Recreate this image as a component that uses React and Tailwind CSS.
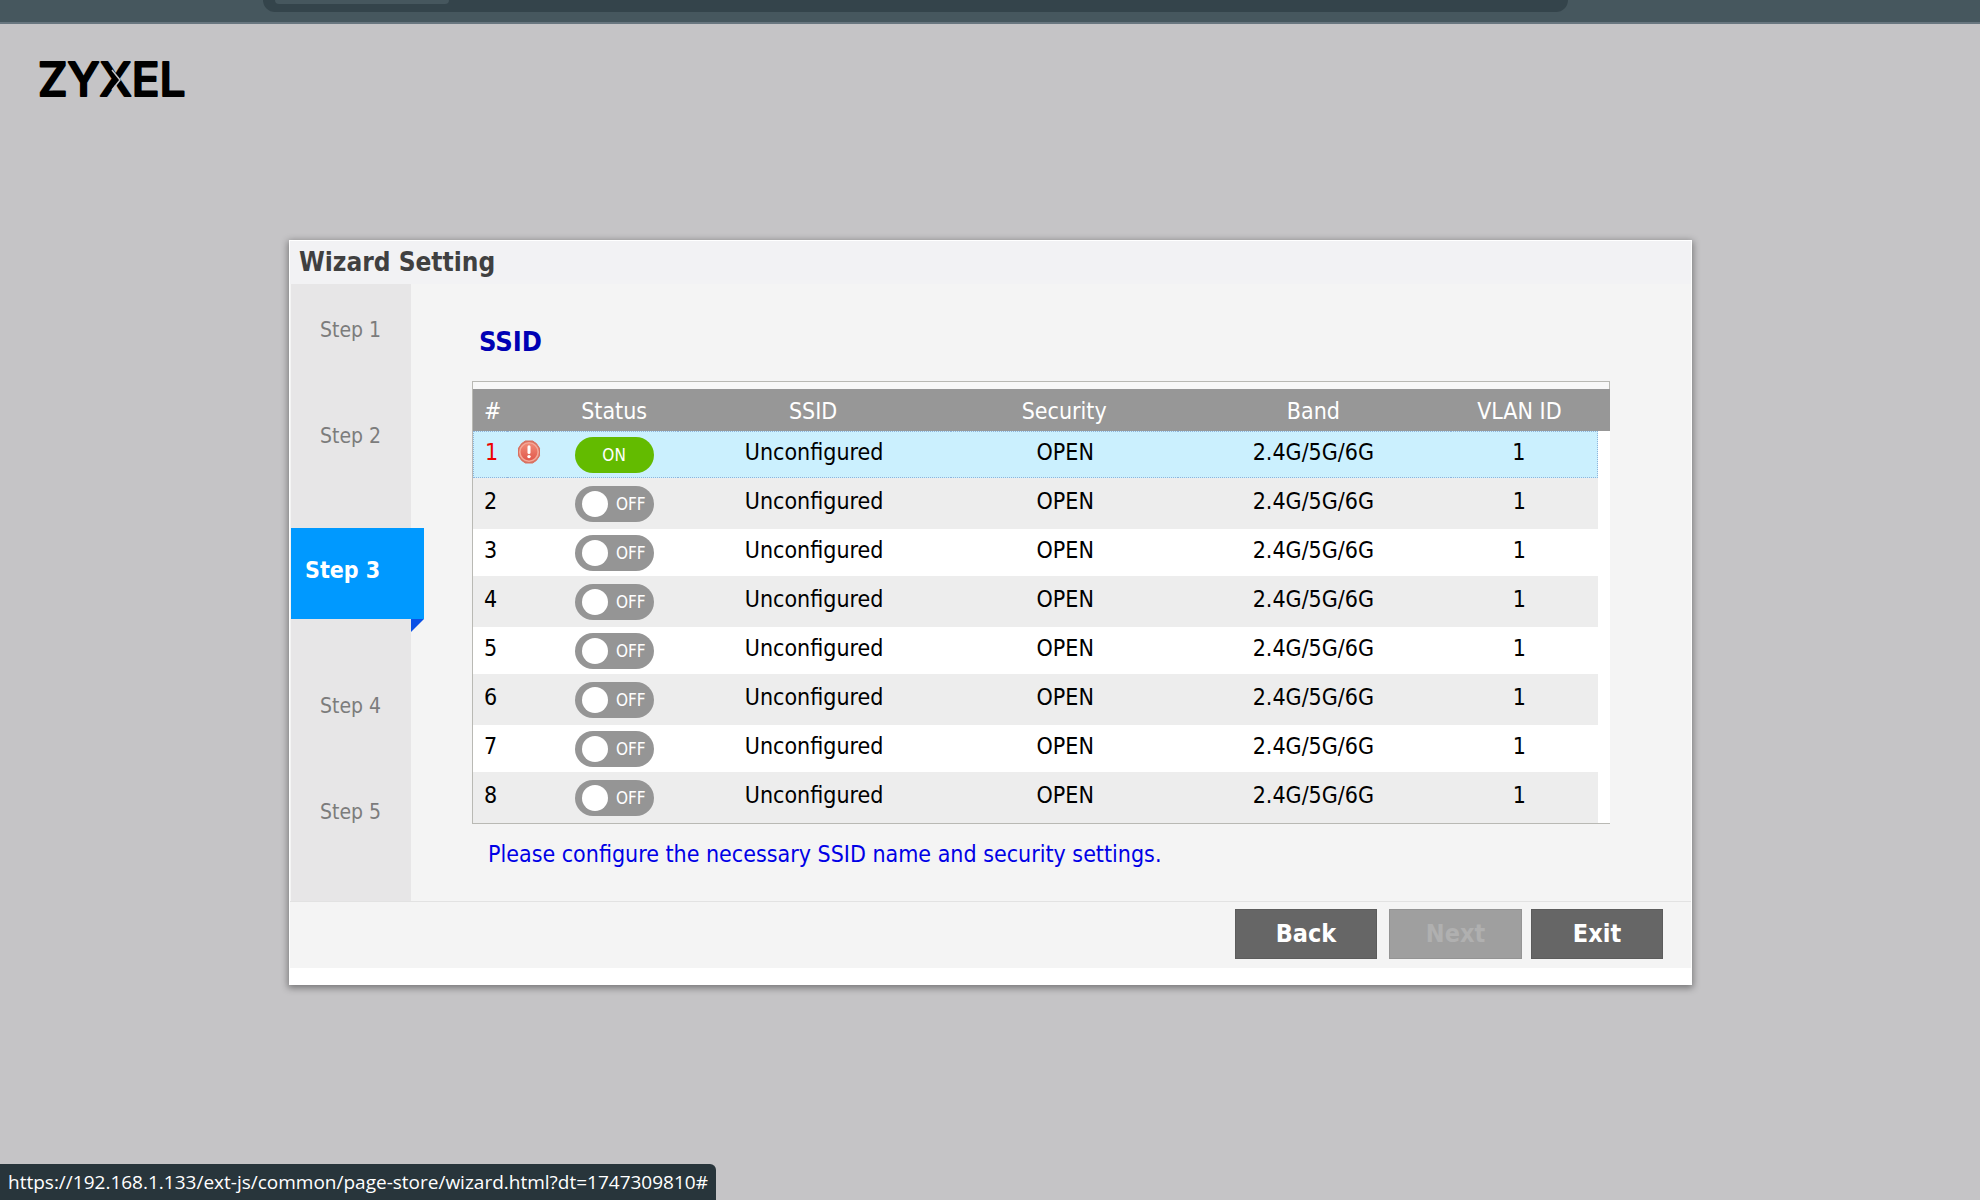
import { useState } from "react";
import clsx from "clsx";

const steps = ["Step 1", "Step 2", "Step 3", "Step 4", "Step 5"];
const activeStep = "Step 3";

const initialRows = Array.from({ length: 8 }, (_, i) => ({
  id: i + 1,
  enabled: i === 0,
  hasError: i === 0,
  ssid: "Unconfigured",
  security: "OPEN",
  band: "2.4G/5G/6G",
  vlan: 1,
}));

function Logo() {
  return (
    <svg width="170" height="70" viewBox="0 0 170 70" role="img" aria-label="ZYXEL">
      <text
        x="4"
        y="50"
        fontFamily="Inter, sans-serif"
        fontWeight="500"
        fontSize="46"
        fill="#000"
        stroke="#000"
        strokeWidth="2"
        strokeLinejoin="round"
      >
        ZYXEL
      </text>
      {/* cut between the two halves of the X */}
      <path d="M78 24l8 10-8 10" fill="none" stroke="#c5c4c6" strokeWidth="1.5" />
    </svg>
  );
}

// Red badge with an exclamation mark
function ErrorIcon() {
  return (
    <svg width="24" height="24" viewBox="0 0 24 24" aria-hidden="true">
      <defs>
        <linearGradient id="err" x1="0" y1="0" x2="0" y2="1">
          <stop offset="0" stopColor="#f28c78" />
          <stop offset="1" stopColor="#e0564a" />
        </linearGradient>
      </defs>
      <path d="M8.4 1h7.2l3.8 2.6 3.1 4.6v7.6l-3.1 4.6-3.8 2.6H8.4l-3.8-2.6-3.1-4.6V8.200l3.100-4.600z" fill="#d9705f" stroke="#d9705f" strokeWidth="1" strokeLinejoin="round" />
      <circle cx="12" cy="12" r="9.2" fill="url(#err)" stroke="#f4a898" strokeWidth="1.6" />
      <path d="M12 6.8v5.6" stroke="#fff" strokeWidth="3" strokeLinecap="round" />
      <circle cx="12" cy="16.6" r="1.7" fill="#fff" />
    </svg>
  );
}

function Toggle({ checked, onChange }) {
  return (
    <label
      className={clsx(
        "inline-flex h-9 w-[79px] cursor-pointer items-center rounded-full align-middle text-[17px] text-white",
        checked ? "justify-center bg-[#63bb00]" : "justify-between bg-[#959595] pl-[7px] pr-2"
      )}
    >
      <input type="checkbox" className="sr-only" checked={checked} onChange={onChange} />
      {!checked && <span className="h-[26px] w-[26px] rounded-full bg-white" />}
      <span>{checked ? "ON" : "OFF"}</span>
    </label>
  );
}

function Steps() {
  return (
    <ol className="flex w-[120px] shrink-0 flex-col gap-[78px] bg-[#e7e6e7] pt-8 text-[21px] leading-7 text-[#7c7c7c]">
      {steps.map((step) =>
        step === activeStep ? (
          <li key={step} aria-current="step" className="relative -mr-[13px] -mb-[5px] h-[91px] bg-[#0099ff] pt-7 pl-3.5 text-[23px] font-bold text-white">
            {step}
            {/* folded ribbon corner */}
            <svg className="absolute top-full right-0" width="13" height="13" viewBox="0 0 13 13" aria-hidden="true">
              <path d="M0 0h13L0 13z" fill="#0a50e6" />
            </svg>
          </li>
        ) : (
          <li key={step} className="pl-[29px]">
            {step}
          </li>
        )
      )}
    </ol>
  );
}

function SsidTable() {
  const [rows, setRows] = useState(initialRows);

  const toggleRow = (id) =>
    setRows(rows.map((row) => (row.id === id ? { ...row, enabled: !row.enabled } : row)));

  return (
    <div className="border-t border-b border-l border-[#b9b9b4] bg-white">
      <div className="h-[7px] border-r border-[#b9b9b4] bg-[#f8f8f8]" />
      <table className="w-full table-fixed border-separate border-spacing-0 text-center text-[23px] leading-7 text-black">
        <colgroup>
          <col className="w-[3%]" />
          <col className="w-[4%]" />
          <col className="w-[11%]" />
          <col className="w-[24%]" />
          <col className="w-[20%]" />
          <col className="w-[24%]" />
          <col />
          <col className="w-3" />
        </colgroup>
        <thead>
          <tr className="h-[42px] bg-[#979797] text-white">
            <th scope="col" className="pt-0.5 pl-[11px] text-left font-normal">#</th>
            <th />
            <th scope="col" className="pt-0.5 pr-0.5 font-normal">Status</th>
            <th scope="col" className="pt-0.5 pr-0.5 font-normal">SSID</th>
            <th scope="col" className="pt-0.5 font-normal">Security</th>
            <th scope="col" className="pt-0.5 pr-0.5 font-normal">Band</th>
            <th scope="col" className="pt-0.5 pr-2.5 font-normal">VLAN ID</th>
            <th />
          </tr>
        </thead>
        <tbody>
          {rows.map((row) => (
            <tr
              key={row.id}
              className={clsx(
                row.id % 2 ? "h-[47px]" : "h-[51px]",
                row.id % 2 === 0 && "bg-[#ededed]",
                // focused row
                row.id === 1 &&
                  "bg-[#cbf0fe] *:border-y *:border-dotted *:border-[#8fb4dc] *:first:border-l *:nth-7:border-r *:last:border-0"
              )}
            >
              <td className={clsx("pb-1.5 pl-[11px] text-left", row.hasError && "text-[#ee0000]")}>{row.id}</td>
              <td className="pb-1.5 pr-0.5">{row.hasError && <div className="flex justify-center"><ErrorIcon /></div>}</td>
              <td className="pr-0.5">
                <Toggle checked={row.enabled} onChange={() => toggleRow(row.id)} />
              </td>
              <td className="pb-1.5">{row.ssid}</td>
              <td className="pb-1.5 pl-0.5">{row.security}</td>
              <td className="pr-0.5 pb-1.5">{row.band}</td>
              <td className="pr-2.5 pb-1.5">{row.vlan}</td>
              <td className="bg-white" />
            </tr>
          ))}
        </tbody>
      </table>
    </div>
  );
}

export default function App() {
  return (
    <div className="min-h-screen bg-[#c5c4c6] font-['DejaVu_Sans_Condensed','DejaVu_Sans',sans-serif]">
      {/* Bottom edge of the browser toolbar */}
      <div className="h-6 border-b-2 border-[#68767f] bg-[#46575e] pr-[412px] pl-[263px]">
        <div className="h-3 rounded-b-[20px] bg-[#34444b] pl-3">
          <div className="h-1 w-[174px] rounded-b-lg bg-[#46575e]" />
        </div>
      </div>

      <header className="flex px-[34px] pt-[22px]">
        <Logo />
      </header>

      <main className="pt-[124px] pr-72 pl-[289px]">
        <section className="border border-white bg-white shadow-[0_2px_7px_1px_rgba(0,0,0,0.4)]">
          <h1 className="bg-[#f2f2f4] px-[9px] pt-0.5 pb-0.5 text-[26px] leading-[39px] font-bold text-[#404040]">Wizard Setting</h1>
          <div className="flex border-b border-[#e2e2e2] bg-[#f4f4f4] pl-px">
            <Steps />
            <div className="min-w-0 flex-1 pt-11 pr-[81px] pb-[31px] pl-[61px]">
              <h2 className="mb-[25px] pl-[7px] text-[27px] leading-7 font-bold text-[#0000b4]">SSID</h2>
              <SsidTable />
              <p className="mt-3.5 pl-4 text-[23px] leading-8 text-[#0000e6]">
                Please configure the necessary SSID name and security settings.
              </p>
            </div>
          </div>
          <div className="flex justify-end bg-[#f4f4f4] pt-[7px] pr-7 pb-[9px] text-[25px] font-bold text-white">
            <button type="button" className="mr-3 h-[50px] w-[142px] border border-[#5c5c5c] bg-[#666666]">Back</button>
            <button type="button" disabled className="mr-[9px] h-[50px] w-[133px] border border-[#949494] bg-[#9f9f9f] text-[#b0b0b0]">Next</button>
            <button type="button" className="h-[50px] w-[132px] border border-[#5c5c5c] bg-[#666666]">Exit</button>
          </div>
          <div className="h-4 bg-white" />
        </section>
      </main>

      {/* Link preview shown by the browser */}
      <div className="fixed bottom-0 left-0 h-9 rounded-tr-md bg-[#28353b] pr-2 pl-2 font-['Open_Sans',sans-serif] text-[19px] leading-9 text-white">
        https://192.168.1.133/ext-js/common/page-store/wizard.html?dt=1747309810#
      </div>
    </div>
  );
}
